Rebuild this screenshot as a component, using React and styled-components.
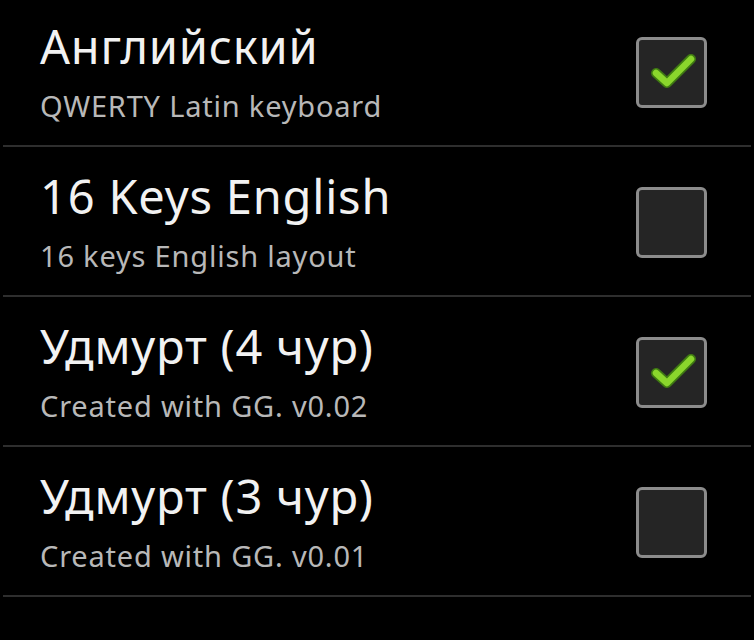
import styled, { createGlobalStyle } from "styled-components";

const GlobalStyle = createGlobalStyle`
    html, body {
        margin: 0;
        background: #000000;
        font-family: "Noto Sans", "Open Sans", sans-serif;
    }
`;

const LAYOUTS = [
    { id: 1, title: "Английский", subtitle: "QWERTY Latin keyboard", checked: true },
    { id: 2, title: "16 Keys English", subtitle: "16 keys English layout", checked: false },
    { id: 3, title: "Удмурт (4 чур)", subtitle: "Created with GG. v0.02", checked: true },
    { id: 4, title: "Удмурт (3 чур)", subtitle: "Created with GG. v0.01", checked: false },
];

const List = styled.div`
    width: 754px;
    height: 640px;
    overflow: hidden;
    background: #000000;

    > .rows {
        margin-top: -3px;
    }
`;

const Row = styled.div`
    display: flex;
    align-items: center;
    justify-content: space-between;
    box-sizing: border-box;
    height: 150px;
    margin: 0 3px;
    padding: 0 44px 0 37px;
    border-bottom: 2px solid #2e2e2e;
`;

const Text = styled.div`
    align-self: flex-start;
    padding-top: 21px;

    > h3 {
        color: #f2f2f2;
        font-size: 47px;
        font-weight: 400;
        line-height: 56px;
        margin: 0;
        letter-spacing: 0.8px;
    }

    > p {
        color: #b8b8b8;
        font-size: 29px;
        font-weight: 400;
        line-height: 64px;
        margin: 0;
        letter-spacing: 0.8px;
    }
`;

const Box = styled.div`
    box-sizing: border-box;
    width: 71px;
    height: 71px;
    margin-top: 2px;
    border: 3px solid #8c8c8c;
    border-radius: 6px;
    background: #252525;
    display: flex;

    > svg {
        width: 65px;
        height: 65px;
    }
`;

const Check = ({ checked }) => (
    <Box>
        {checked && (
            <svg viewBox="3 3 65 65">
                <polyline
                    points="20,36 31,46 55,22"
                    fill="none"
                    stroke="#3f7a12"
                    strokeWidth="10"
                    strokeLinecap="round"
                    strokeLinejoin="round"
                />
                <polyline
                    points="20,36 31,46 55,22"
                    fill="none"
                    stroke="#8ad62c"
                    strokeWidth="6.5"
                    strokeLinecap="round"
                    strokeLinejoin="round"
                />
            </svg>
        )}
    </Box>
);

const App = () => {
    return (
        <List>
            <GlobalStyle />
            <div className="rows">
                { LAYOUTS.map((item) => (
                    <Row key={item.id}>
                        <Text>
                            <h3>{item.title}</h3>
                            <p>{item.subtitle}</p>
                        </Text>
                        <Check checked={item.checked} />
                    </Row>
                )) }
            </div>
        </List>
    );
};

export default App;
